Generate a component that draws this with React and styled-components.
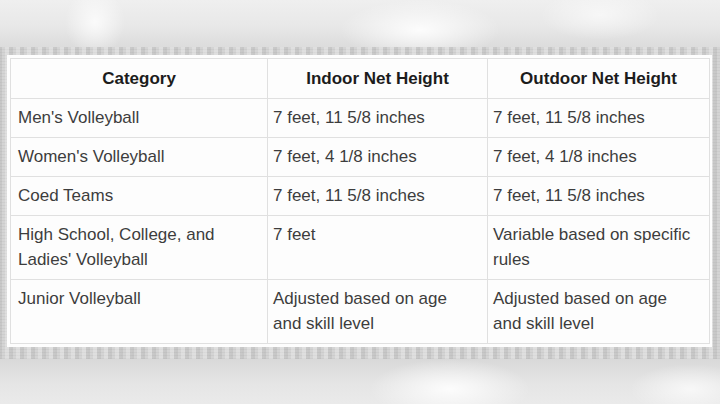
import styled, { createGlobalStyle } from "styled-components";

const GlobalStyle = createGlobalStyle`
  html, body {
    margin: 0;
    padding: 0;
    background: #e8e8e8;
  }
  body {
    font-family: "Liberation Sans", Arial, sans-serif;
  }
`;

const Page = styled.div`
  width: 720px;
  height: 404px;
  display: flex;
  flex-direction: column;
  overflow: hidden;
`;

// blurred photo edge above and below the printed table
const Blur = styled.div`
  height: ${(p) => p.$h}px;
  flex-shrink: 0;
  background: ${(p) =>
    p.$bottom
      ? `radial-gradient(ellipse 80px 30px at 450px 30px, rgba(255,255,255,0.9), rgba(255,255,255,0) 100%),
         radial-gradient(ellipse 60px 25px at 690px 30px, rgba(255,255,255,0.7), rgba(255,255,255,0) 100%),
         linear-gradient(180deg, #d9d9d9 0%, #e5e5e5 40%, #eeeeee 100%)`
      : `radial-gradient(ellipse 30px 35px at 95px 22px, rgba(255,255,255,0.8), rgba(255,255,255,0) 100%),
         radial-gradient(ellipse 80px 30px at 420px 30px, rgba(255,255,255,0.9), rgba(255,255,255,0) 100%),
         radial-gradient(ellipse 60px 25px at 600px 15px, rgba(255,255,255,0.6), rgba(255,255,255,0) 100%),
         linear-gradient(180deg, #efefef 0%, #e8e8e8 55%, #dcdcdc 100%)`};
`;

// the scanned, speckled frame round the sheet
const Frame = styled.div`
  flex-shrink: 0;
  padding: 8px 8px 12px 7px;
  background:
    repeating-linear-gradient(90deg, rgba(140,140,140,0.18) 0 2px, rgba(255,255,255,0) 2px 5px, rgba(255,255,255,0.25) 5px 9px, rgba(120,120,120,0.12) 9px 11px),
    repeating-linear-gradient(0deg, rgba(150,150,150,0.12) 0 1px, rgba(255,255,255,0) 1px 3px),
    #d4d4d4;
`;

const Sheet = styled.div`
  background: #fdfdfd;
  padding: 3px;
`;

const Table = styled.table`
  width: 699px;
  table-layout: fixed;
  border-collapse: collapse;
  border: 1px solid #d4d4d4;
  font-size: 17px;
`;

const Col = styled.col`
  width: ${(p) => p.$w}px;
`;

const Head = styled.th`
  height: 39px;
  padding: 0 6px;
  font-weight: bold;
  color: #1c1c1c;
  text-align: center;
  vertical-align: middle;
  border: 1px solid #e0e0e0;
`;

const Cell = styled.td`
  padding: 6px 14px 7px ${(p) => (p.$first ? 7 : 5)}px;
  line-height: 25px;
  color: #3d3d3d;
  text-align: left;
  vertical-align: top;
  border: 1px solid #e0e0e0;
`;

const rows = [
  ["Men's Volleyball", "7 feet, 11 5/8 inches", "7 feet, 11 5/8 inches"],
  ["Women's Volleyball", "7 feet, 4 1/8 inches", "7 feet, 4 1/8 inches"],
  ["Coed Teams", "7 feet, 11 5/8 inches", "7 feet, 11 5/8 inches"],
  [
    "High School, College, and Ladies' Volleyball",
    "7 feet",
    "Variable based on specific rules",
  ],
  [
    "Junior Volleyball",
    "Adjusted based on age and skill level",
    "Adjusted based on age and skill level",
  ],
];

export default function App() {
  return (
    <Page>
      <GlobalStyle />
      <Blur $h={47} />
      <Frame>
        <Sheet>
          <Table>
            <colgroup>
              <Col $w={257} />
              <Col $w={220} />
              <Col $w={222} />
            </colgroup>
            <thead>
              <tr>
                <Head>Category</Head>
                <Head>Indoor Net Height</Head>
                <Head>Outdoor Net Height</Head>
              </tr>
            </thead>
            <tbody>
              {rows.map((r) => (
                <tr key={r[0]}>
                  <Cell $first>{r[0]}</Cell>
                  <Cell>{r[1]}</Cell>
                  <Cell>{r[2]}</Cell>
                </tr>
              ))}
            </tbody>
          </Table>
        </Sheet>
      </Frame>
      <Blur $bottom $h={60} />
    </Page>
  );
}
